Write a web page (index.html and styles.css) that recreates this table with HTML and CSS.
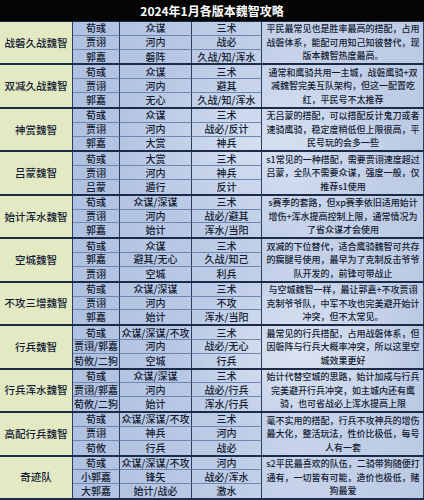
FILE: index.html
```html
<!DOCTYPE html>
<html lang="zh">
<head>
<meta charset="utf-8">
<link rel="stylesheet" href="styles.css">
</head>
<body>
<div class="page">
  <div class="title">2024年1月各版本魏智攻略</div>
  <div class="table">
    <div class="group">
      <div class="name">战磐久战魏智</div>
      <div class="c">荀彧</div><div class="c">众谋</div><div class="c">三术</div>
      <div class="c">贾诩</div><div class="c">河内</div><div class="c">战必</div>
      <div class="c">郭嘉</div><div class="c">磐阵</div><div class="c">久战/知/浑水</div>
      <div class="desc">平民最常见也是胜率最高的搭配，占用战磐体系，能配可用知己知彼替代，现版本魏智热度最高。</div>
    </div>
    <div class="group">
      <div class="name">双减久战魏智</div>
      <div class="c">荀彧</div><div class="c">众谋</div><div class="c">三术</div>
      <div class="c">贾诩</div><div class="c">河内</div><div class="c">避其</div>
      <div class="c">郭嘉</div><div class="c">无心</div><div class="c">久战/知/浑水</div>
      <div class="desc">通常和鹰骑共用一主城，战磐鹰骑+双减魏智完美互队架构，但这一配置吃红，平民号不太推荐</div>
    </div>
    <div class="group">
      <div class="name">神赏魏智</div>
      <div class="c">荀彧</div><div class="c">众谋</div><div class="c">三术</div>
      <div class="c">贾诩</div><div class="c">河内</div><div class="c">战必/反计</div>
      <div class="c">郭嘉</div><div class="c">大赏</div><div class="c">神兵</div>
      <div class="desc">无吕蒙的搭配，可以搭配反计鬼刀或者速骑鹰骑，稳定度稍低但上限很高，平民号玩的会多一些</div>
    </div>
    <div class="group">
      <div class="name">吕蒙魏智</div>
      <div class="c">荀彧</div><div class="c">大赏</div><div class="c">三术</div>
      <div class="c">贾诩</div><div class="c">河内</div><div class="c">神兵</div>
      <div class="c">吕蒙</div><div class="c">遁行</div><div class="c">反计</div>
      <div class="desc">s1常见的一种搭配，需要贾诩速度超过吕蒙，全队不需要众谋，强度一般，仅推荐s1使用</div>
    </div>
    <div class="group">
      <div class="name">始计浑水魏智</div>
      <div class="c">荀彧</div><div class="c">众谋/深谋</div><div class="c">三术</div>
      <div class="c">贾诩</div><div class="c">河内</div><div class="c">战必/避其</div>
      <div class="c">郭嘉</div><div class="c">始计</div><div class="c">浑水/当阳</div>
      <div class="desc">s赛季的套路，但xp赛季依旧适用始计增伤+浑水提高控制上限，通常情况为了省众谋才会使用</div>
    </div>
    <div class="group">
      <div class="name">空城魏智</div>
      <div class="c">荀彧</div><div class="c">众谋</div><div class="c">三术</div>
      <div class="c">郭嘉</div><div class="c">避其/无心</div><div class="c">久战/知己</div>
      <div class="c">贾诩</div><div class="c">空城</div><div class="c">利兵</div>
      <div class="desc">双减的下位替代，适合鹰骑魏智可共存的瘸腿号使用，最早为了克制反击爷爷队开发的，前锋可带战止</div>
    </div>
    <div class="group">
      <div class="name">不攻三增魏智</div>
      <div class="c">荀彧</div><div class="c">众谋/深谋</div><div class="c">三术</div>
      <div class="c">贾诩</div><div class="c">河内</div><div class="c">不攻</div>
      <div class="c">郭嘉</div><div class="c">始计</div><div class="c">浑水/当阳</div>
      <div class="desc">与空城魏智一样，最让郭嘉+不攻贾诩克制爷爷队，中军不攻也完美避开始计冲突，但不太常见。</div>
    </div>
    <div class="group">
      <div class="name">行兵魏智</div>
      <div class="c">荀彧</div><div class="c">众谋/深谋/不攻</div><div class="c">三术</div>
      <div class="c">贾诩/郭嘉</div><div class="c">河内</div><div class="c">战必/无心</div>
      <div class="c">荀攸/二狗</div><div class="c">空城</div><div class="c">行兵</div>
      <div class="desc">最常见的行兵搭配，占用战磐体系，但因磐阵与行兵大概率冲突，所以这里空城效果更好</div>
    </div>
    <div class="group">
      <div class="name">行兵浑水魏智</div>
      <div class="c">荀彧</div><div class="c">众谋/深谋</div><div class="c">三术</div>
      <div class="c">贾诩/郭嘉</div><div class="c">河内</div><div class="c">战必/行兵</div>
      <div class="c">荀攸/二狗</div><div class="c">始计</div><div class="c">浑水/行兵</div>
      <div class="desc">始计代替空城的思路，始计加成与行兵完美避开行兵冲突，如主城内还有鹰骑，也可省战必上浑水提高上限</div>
    </div>
    <div class="group">
      <div class="name">高配行兵魏智</div>
      <div class="c">荀彧</div><div class="c">众谋/深谋/不攻</div><div class="c">三术</div>
      <div class="c">贾诩</div><div class="c">神兵</div><div class="c">河内</div>
      <div class="c">荀攸</div><div class="c">行兵</div><div class="c">战必</div>
      <div class="desc">毫不实用的搭配，行兵不攻神兵的增伤最大化，整活玩法，性价比极低，每号人有一套</div>
    </div>
    <div class="group">
      <div class="name">奇迹队</div>
      <div class="c">荀彧</div><div class="c">众谋/深谋/不攻</div><div class="c">河内</div>
      <div class="c">小郭嘉</div><div class="c">锋矢</div><div class="c">战必/浑水</div>
      <div class="c">大郭嘉</div><div class="c">始计/战必</div><div class="c">激水</div>
      <div class="desc">s2平民最喜欢的队伍，二骑带狗随便打通有，一切皆有可能，造价也极低，赌狗最爱</div>
    </div>
  </div>
</div>
</body>
</html>
```
FILE: styles.css
```css
html, body {
  margin: 0;
  padding: 0;
}
body {
  width: 424px;
  height: 500px;
  overflow: hidden;
  font-family: "Noto Sans CJK SC", "Noto Sans", sans-serif;
  color: #141c33;
}
.page {
  width: 424px;
  height: 500px;
  display: flex;
  flex-direction: column;
}
.title {
  height: 22px;
  flex: none;
  background: #050505;
  color: #ffffff;
  font-weight: 700;
  font-size: 12px;
  line-height: 14px;
  display: flex;
  align-items: center;
  justify-content: center;
  box-sizing: border-box;
  border-bottom: 1px solid #1b2b48;
}
.table {
  flex: 1 1 0;
  min-height: 0;
  display: flex;
  flex-direction: column;
  background:
    radial-gradient(ellipse 120px 80px at 300px 330px, rgba(235, 240, 248, 0.55), rgba(235, 240, 248, 0) 100%),
    radial-gradient(ellipse 140px 90px at 260px 120px, rgba(230, 237, 248, 0.5), rgba(230, 237, 248, 0) 100%),
    linear-gradient(to right, #a9bcde 0%, #b9c9e4 45%, #c6d3ea 70%, #bccae4 100%);
}
.group {
  flex: 1 1 0;
  min-height: 0;
  display: grid;
  grid-template-columns: 73px 47px 72px 70px minmax(0, 1fr);
  grid-template-rows: repeat(3, minmax(0, 1fr));
  border-bottom: 2px solid #1b2b48;
  box-sizing: border-box;
}
.name {
  grid-column: 1;
  grid-row: 1 / 4;
  background: #e3e9c3;
  border-right: 1px solid #2a3c60;
  display: flex;
  align-items: center;
  justify-content: center;
  font-size: 10.5px;
  line-height: 12px;
  font-weight: 500;
  white-space: nowrap;
  min-height: 0;
}
.c {
  display: flex;
  align-items: center;
  justify-content: center;
  font-size: 10px;
  font-weight: 500;
  white-space: nowrap;
  border-right: 1px solid #2a3c60;
  line-height: 12px;
  min-height: 0;
}
.c:nth-child(-n+7) {
  border-bottom: 1px solid #6f86b0;
}
.desc {
  grid-column: 5;
  grid-row: 1 / 4;
  display: flex;
  align-items: center;
  justify-content: center;
  text-align: center;
  font-size: 9px;
  font-weight: 500;
  line-height: 13.5px;
  padding: 0 2px 0 3px;
  border-right: 1px solid #2a3c60;
  min-height: 0;
}
```
